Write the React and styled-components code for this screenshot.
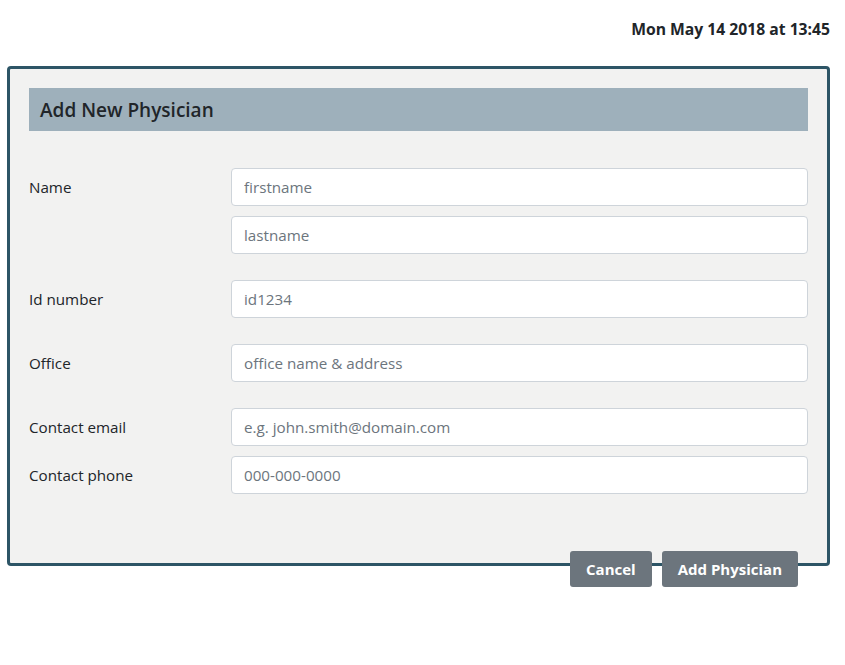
import styled, { createGlobalStyle } from "styled-components"

const Global = createGlobalStyle`
  body {
    margin: 0;
    background: #fff;
    font-family: "Open Sans", "Noto Sans", sans-serif;
    color: #212529;
  }
  * { box-sizing: border-box; }
`

const Page = styled.div`
  padding: 18px 15px 0 7px;
`

const DateLine = styled.div`
  text-align: right;
  font-weight: 700;
  font-size: 15.7px;
  line-height: 22px;
  color: #212529;
  margin-bottom: 26px;
`

const Card = styled.div`
  border: 3px solid #2d5566;
  border-radius: 4px;
  background: #f2f2f1;
  padding: 19px 19px 69px 19px;
`

const Header = styled.div`
  background: #9eb0bb;
  height: 43px;
  display: flex;
  align-items: center;
  padding-left: 11px;
  font-size: 19px;
  font-weight: 600;
  color: #212529;
  margin-bottom: 37px;
`

const Row = styled.div`
  display: grid;
  grid-template-columns: 202px 1fr;
  margin-bottom: ${p => p.gap}px;
`

const Label = styled.div`
  font-size: 15.2px;
  line-height: 38px;
`

const Inputs = styled.div`
  display: flex;
  flex-direction: column;
  gap: 10px;
`

const Input = styled.input`
  height: 38px;
  width: 100%;
  border: 1px solid #ced4da;
  border-radius: 4px;
  background: #fff;
  padding: 0 12px;
  font-family: inherit;
  font-size: 15.2px;
  color: #495057;
  &::placeholder { color: #6c757d; }
`

const Actions = styled.div`
  display: flex;
  justify-content: flex-end;
  gap: 10px;
  margin-top: -15px;
  padding-right: 32px;
`

const Button = styled.button`
  height: 36px;
  padding: 0 16px;
  border: none;
  border-radius: 3px;
  background: #6c757d;
  color: #fff;
  font-family: inherit;
  font-weight: 700;
  font-size: 15px;
`

export default function App() {
  return (
    <Page>
      <Global />
      <DateLine>Mon May 14 2018 at 13:45</DateLine>
      <Card>
        <Header>Add New Physician</Header>
        <Row gap={26}>
          <Label>Name</Label>
          <Inputs>
            <Input placeholder="firstname" />
            <Input placeholder="lastname" />
          </Inputs>
        </Row>
        <Row gap={26}>
          <Label>Id number</Label>
          <Input placeholder="id1234" />
        </Row>
        <Row gap={26}>
          <Label>Office</Label>
          <Input placeholder="office name &amp; address" />
        </Row>
        <Row gap={10}>
          <Label>Contact email</Label>
          <Input placeholder="e.g. john.smith@domain.com" />
        </Row>
        <Row gap={0}>
          <Label>Contact phone</Label>
          <Input placeholder="000-000-0000" />
        </Row>
      </Card>
      <Actions>
        <Button>Cancel</Button>
        <Button>Add Physician</Button>
      </Actions>
    </Page>
  )
}
